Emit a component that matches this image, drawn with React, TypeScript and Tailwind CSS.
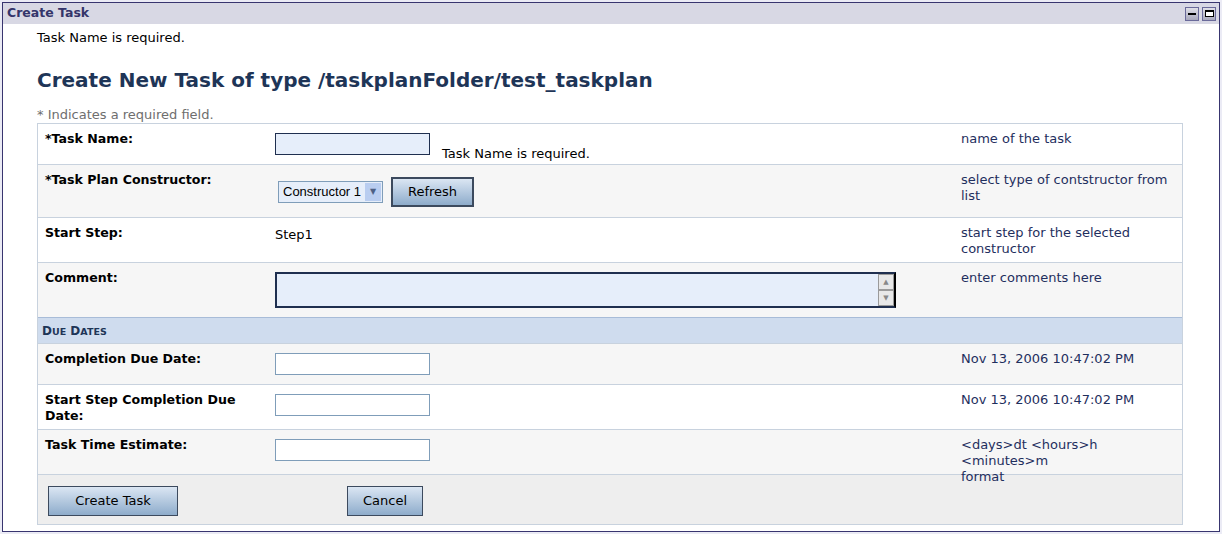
import React from "react";

const F = { fontFamily: '"DejaVu Sans", Verdana, sans-serif' };

function Row({ bg, h, label, children, help }: { bg: string; h: string; label: React.ReactNode; children?: React.ReactNode; help?: React.ReactNode }) {
  return (
    <div className={`flex border-t border-[#c8d2de] ${bg} ${h}`}>
      <div className="w-[237px] pl-[7px] pt-[7px] text-[12.6px] font-bold text-black leading-[16px]">{label}</div>
      <div className="w-[686px] pt-[9px]">{children}</div>
      <div className="flex-1 pt-[7px] text-[13px] text-[#1f2f5e] leading-[16px] pr-1">{help}</div>
    </div>
  );
}

const input = "block w-[155px] h-[22px] border border-[#7f9db9] bg-white";
const btn = "h-[30px] border border-[#3c4a5e] bg-gradient-to-b from-[#dbe6f3] to-[#8eaccb] text-[13px] text-black";

export default function App() {
  return (
    <div style={F} className="w-[1222px] h-[534px] bg-[#ebebf5] p-[2px]">
      <div className="h-[530px] border border-[#38356f] bg-white">
        <div className="h-[21px] bg-[#d8d8e4] flex items-center justify-between pl-[4px] pr-[3px]">
          <span className="text-[12.5px] font-bold text-[#35356a]">Create Task</span>
          <div className="flex gap-[3px]">
            <div className="w-[14px] h-[14px] border border-[#6a6a9a] bg-gradient-to-b from-[#e0e0e8] to-[#a8a8bc] flex items-center justify-center"><div className="w-[8px] h-[2px] bg-black" /></div>
            <div className="w-[14px] h-[14px] border border-[#6a6a9a] bg-gradient-to-b from-[#e0e0e8] to-[#a8a8bc] flex items-center justify-center"><div className="w-[9px] h-[7px] border border-black border-t-[2px] bg-white" /></div>
          </div>
        </div>
        <div className="pl-[34px] pr-[36px]">
          <div className="pt-[6px] text-[13px] text-black leading-[16px]">Task Name is required.</div>
          <h1 className="mt-[21px] text-[20px] font-bold text-[#1e3557] leading-[26px]">Create New Task of type /taskplanFolder/test_taskplan</h1>
          <div className="mt-[14px] text-[13px] text-[#6e6e6e] leading-[16px]">* Indicates a required field.</div>
          <div className="border-x border-b border-[#c8d2de]">
            <Row bg="bg-white" h="h-[41px]" label="*Task Name:" help="name of the task">
              <div className="flex items-end">
                <div className="w-[155px] h-[22px] border border-[#1f2f4f] bg-[#e6eefa]" />
                <span className="ml-[12px] text-[13px] leading-[14px] mb-[-6px]">Task Name is required.</span>
              </div>
            </Row>
            <Row bg="bg-[#f6f6f6]" h="h-[53px]" label="*Task Plan Constructor:" help={<>select type of contstructor from<br />list</>}>
              <div className="flex items-center mt-[3px]">
                <div className="ml-[3px] flex items-center h-[22px] w-[105px] border border-[#7f9db9] bg-[#e6eefa]">
                  <span className="flex-1 pl-[4px] text-[13px]" style={{ fontFamily: '"Liberation Sans", Arial, sans-serif' }}>Constructor 1</span>
                  <div className="w-[16px] h-[18px] mr-[1px] bg-[#b9cdf0] flex items-center justify-center text-[8px] text-[#4d6185]">▼</div>
                </div>
                <button className={`${btn} ml-[8px] w-[83px] h-[30px] border-2 border-[#1f2b3d]`}>Refresh</button>
              </div>
            </Row>
            <Row bg="bg-white" h="h-[45px]" label="Start Step:" help={<>start step for the selected<br />constructor</>}>
              <div className="text-[13px] mt-[-2px]">Step1</div>
            </Row>
            <Row bg="bg-[#f6f6f6]" h="h-[55px]" label="Comment:" help="enter comments here">
              <div className="flex w-[621px] h-[36px] border-2 border-[#1f2f4f] border-r-[#000] bg-[#e6eefa]">
                <div className="flex-1" />
                <div className="w-[16px] flex flex-col bg-[#e8e8e8]">
                  <div className="flex-1 border border-[#9a9a9a] flex items-center justify-center text-[7px] text-[#888]">▲</div>
                  <div className="flex-1 border border-[#9a9a9a] flex items-center justify-center text-[7px] text-[#888]">▼</div>
                </div>
              </div>
            </Row>
            <div className="h-[26px] border-t border-[#a8bcd8] bg-[#cfdcee] flex items-center pl-[4px] text-[12px] font-bold text-[#1e3557]">
              <span>D<span className="text-[9.5px]">UE</span> D<span className="text-[9.5px]">ATES</span></span>
            </div>
            <Row bg="bg-[#f6f6f6]" h="h-[41px]" label="Completion Due Date:" help="Nov 13, 2006 10:47:02 PM">
              <div className={input} />
            </Row>
            <Row bg="bg-white" h="h-[45px]" label={<>Start Step Completion Due<br />Date:</>} help="Nov 13, 2006 10:47:02 PM">
              <div className={input} />
            </Row>
            <Row bg="bg-[#f6f6f6]" h="h-[45px]" label="Task Time Estimate:" help={<>&lt;days&gt;dt &lt;hours&gt;h &lt;minutes&gt;m<br />format</>}>
              <div className={input} />
            </Row>
            <div className="h-[50px] border-t border-[#c8d2de] bg-[#eeeeee] flex items-start pt-[11px] pl-[10px]">
              <button className={`${btn} w-[130px]`}>Create Task</button>
              <button className={`${btn} w-[76px] ml-[169px]`}>Cancel</button>
            </div>
          </div>
        </div>
      </div>
    </div>
  );
}
